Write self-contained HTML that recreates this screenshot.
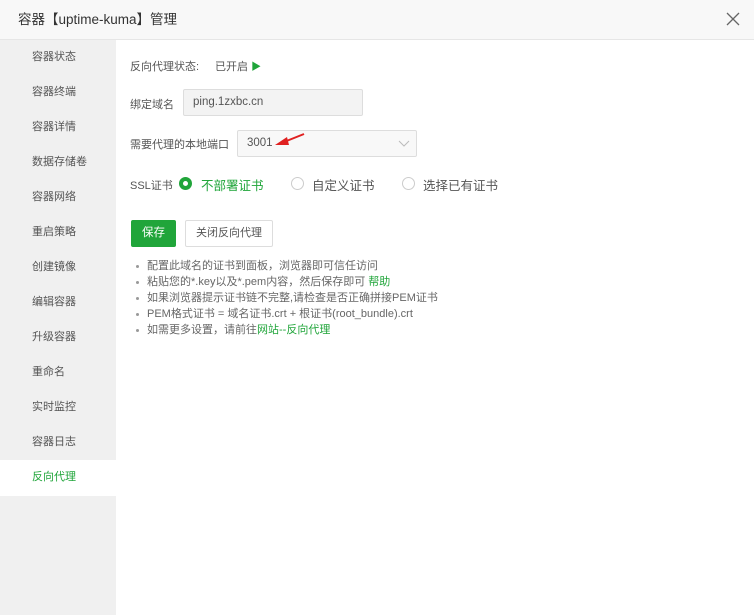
<!DOCTYPE html>
<html><head><meta charset="utf-8">
<style>
*{margin:0;padding:0;box-sizing:border-box}
body{width:754px;height:615px;background:#fff;font-family:"Liberation Sans","Noto Sans CJK SC",sans-serif;font-size:11px;color:#555;position:relative;overflow:hidden}
.hd{position:absolute;left:0;top:0;width:754px;height:40px;background:#f8f8f8;border-bottom:1px solid #e6e6e6;font-size:13.5px;color:#333;line-height:39px;padding-left:18px}
.x{position:absolute;right:14px;top:12px;width:14px;height:14px}
.sb{position:absolute;left:0;top:40px;width:116px;height:575px;background:#f0f0f0}
.it{position:absolute;left:32px;font-size:11px;color:#555;height:35px;line-height:35px}
.act{position:absolute;left:0;top:420px;width:116px;height:36px;background:#fff}
.t{position:absolute;font-size:11px;color:#555;white-space:nowrap}
.inp{position:absolute;border:1px solid #ddd;border-radius:2px;height:27px;line-height:25px;padding-left:9px;color:#555;font-size:11.5px}
.rad{position:absolute;width:13px;height:13px;border-radius:50%;border:1px solid #ccc;background:#fff}
ul{position:absolute;left:133px;top:258px;list-style:none;font-size:11px;color:#666;line-height:16px}
ul li{padding-left:14px;position:relative;white-space:nowrap}
ul li:before{content:"";position:absolute;left:3px;top:7px;width:3px;height:3px;border-radius:50%;background:#999}
.g{color:#20a53a}
</style></head><body>
<div class="hd">容器【uptime-kuma】管理
<svg class="x" viewBox="0 0 14 14"><path d="M1 1L13 13M13 1L1 13" stroke="#666" stroke-width="1.3"/></svg></div>
<div class="sb">
<div class="act"></div>
</div>
<div class="it" style="top:40px">容器状态</div>
<div class="it" style="top:75px">容器终端</div>
<div class="it" style="top:110px">容器详情</div>
<div class="it" style="top:145px">数据存储卷</div>
<div class="it" style="top:180px">容器网络</div>
<div class="it" style="top:215px">重启策略</div>
<div class="it" style="top:250px">创建镜像</div>
<div class="it" style="top:285px">编辑容器</div>
<div class="it" style="top:320px">升级容器</div>
<div class="it" style="top:355px">重命名</div>
<div class="it" style="top:390px">实时监控</div>
<div class="it" style="top:425px">容器日志</div>
<div class="it" style="top:460px;color:#20a53a">反向代理</div>

<div class="t" style="left:130px;top:58px">反向代理状态:</div>
<div class="t" style="left:215px;top:58px">已开启 <span style="color:#20a53a;font-size:10px">▶</span></div>
<div class="t" style="left:130px;top:96px">绑定域名</div>
<div class="inp" style="left:183px;top:89px;width:180px;background:#f3f3f3">ping.1zxbc.cn</div>
<div class="t" style="left:130px;top:136px">需要代理的本地端口</div>
<div class="inp" style="left:237px;top:130px;width:180px;background:#f8f8f8">3001</div>
<svg style="position:absolute;left:398px;top:140px" width="12" height="8" viewBox="0 0 12 8"><path d="M1 1L6 6L11 1" fill="none" stroke="#bbb" stroke-width="1"/></svg>
<svg style="position:absolute;left:272px;top:132px" width="34" height="16" viewBox="0 0 34 16"><path d="M32 2L12 10" stroke="#e02020" stroke-width="2"/><path d="M3 13L15 5L17 13Z" fill="#e02020"/></svg>
<div class="t" style="left:130px;top:177px">SSL证书</div>
<div class="rad" style="left:179px;top:177px;border:4px solid #20a53a"></div>
<div class="t g" style="left:201px;top:175px;font-size:12.5px">不部署证书</div>
<div class="rad" style="left:291px;top:177px"></div>
<div class="t" style="left:312px;top:175px;font-size:12.5px">自定义证书</div>
<div class="rad" style="left:402px;top:177px"></div>
<div class="t" style="left:423px;top:175px;font-size:12.5px">选择已有证书</div>
<div style="position:absolute;left:131px;top:220px;width:45px;height:27px;background:#20a53a;border-radius:2px;color:#fff;font-size:11.5px;line-height:27px;text-align:center">保存</div>
<div style="position:absolute;left:185px;top:220px;width:88px;height:27px;border:1px solid #ddd;border-radius:2px;color:#555;font-size:11px;line-height:25px;text-align:center">关闭反向代理</div>
<ul>
<li>配置此域名的证书到面板，浏览器即可信任访问</li>
<li>粘贴您的*.key以及*.pem内容，然后保存即可 <span class="g">帮助</span></li>
<li>如果浏览器提示证书链不完整,请检查是否正确拼接PEM证书</li>
<li>PEM格式证书 = 域名证书.crt + 根证书(root_bundle).crt</li>
<li>如需更多设置，请前往<span class="g">网站--反向代理</span></li>
</ul>
</body></html>
